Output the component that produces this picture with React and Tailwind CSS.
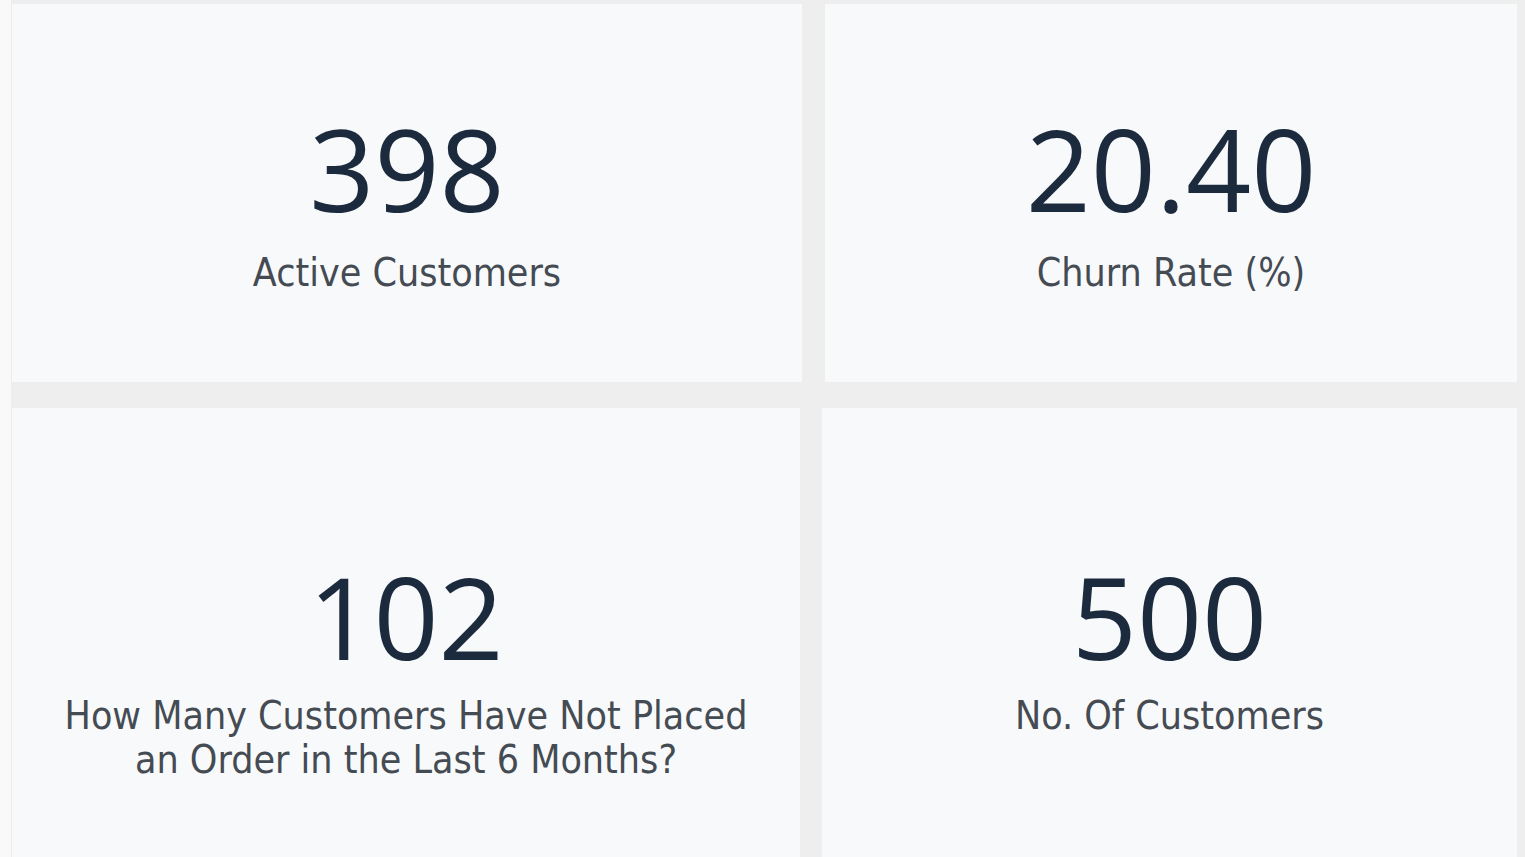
import React from "react";

const cards = [
  [
    { value: "398", label: "Active Customers", width: "w-[790px]" },
    { value: "20.40", label: "Churn Rate (%)", width: "flex-1" },
  ],
  [
    {
      value: "102",
      label: ["How Many Customers Have Not Placed", "an Order in the Last 6 Months?"],
      width: "w-[788px]",
    },
    { value: "500", label: "No. Of Customers", width: "flex-1" },
  ],
];

function KpiCard({ value, label, width, top, gap }) {
  const lines = Array.isArray(label) ? label : [label];
  return (
    <div className={`${width} h-full bg-[#f8f9fb] flex flex-col items-center ${top}`}>
      <div className="text-[114px] leading-none text-[#1c2a3d] font-['Open_Sans',sans-serif]">
        {value}
      </div>
      <div className={`${gap} text-center text-[39px] leading-[44px] text-[#454b53] font-['DejaVu_Sans_Condensed','DejaVu_Sans',sans-serif] [font-stretch:condensed]`}>
        {lines.map((l) => (
          <div key={l}>{l}</div>
        ))}
      </div>
    </div>
  );
}

export default function App() {
  return (
    <div className="w-[1525px] h-[857px] overflow-hidden flex bg-[#eeeeee]">
      {/* page margin outside the report canvas */}
      <div className="w-[12px] h-full bg-[#f9f9f9] border-r border-[#ececec]" />
      <div className="flex-1 flex flex-col gap-[26px] pt-[4px] pr-[8px]">
        <div className="flex gap-[23px] h-[378px] shrink-0">
          {cards[0].map((c) => (
            <KpiCard key={c.value} {...c} top="pt-[107px]" gap="mt-[26px]" />
          ))}
        </div>
        <div className="flex gap-[22px] h-[500px] shrink-0">
          {cards[1].map((c) => (
            <KpiCard key={c.value} {...c} top="pt-[151px]" gap="mt-[21px]" />
          ))}
        </div>
      </div>
    </div>
  );
}
